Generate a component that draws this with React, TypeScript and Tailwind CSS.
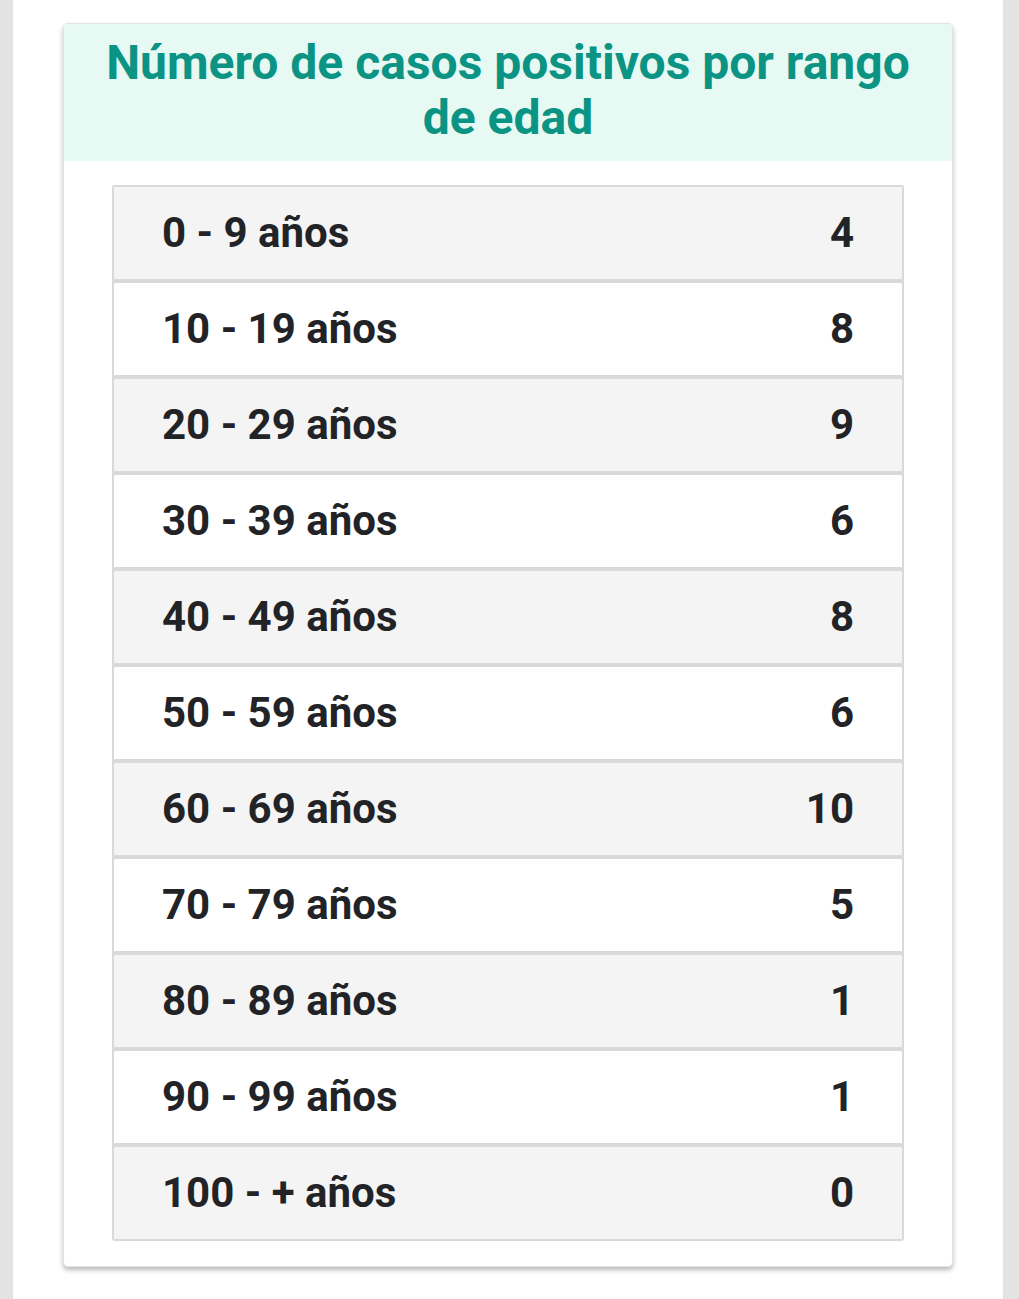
import React from "react";

const rows: [string, string][] = [
  ["0 - 9 años", "4"],
  ["10 - 19 años", "8"],
  ["20 - 29 años", "9"],
  ["30 - 39 años", "6"],
  ["40 - 49 años", "8"],
  ["50 - 59 años", "6"],
  ["60 - 69 años", "10"],
  ["70 - 79 años", "5"],
  ["80 - 89 años", "1"],
  ["90 - 99 años", "1"],
  ["100 - + años", "0"],
];

export default function App() {
  return (
    <div
      className="flex min-h-[1299px] w-full bg-[#e3e3e3]"
      style={{ fontFamily: "Roboto, 'Liberation Sans', sans-serif" }}
    >
      <div className="ml-[13px] w-[990px] bg-white pt-[23px]">
        <div className="mx-[50px] w-[890px] rounded-[5px] border border-[#e4e4e4] bg-white shadow-[0_3px_5px_rgba(0,0,0,0.28)]">
          <div className="rounded-t-[5px] bg-[#e6f9f3] px-4 pb-[16px] pt-[11px] text-center text-[48px] font-bold leading-[55px] text-[#0b9383]">
            Número de casos positivos por rango
            <br />
            de edad
          </div>
          <div className="px-[48px] pb-[25px] pt-[24px]">
            <div className="overflow-hidden rounded-[3px]">
              {rows.map(([label, value], i) => (
                <div
                  key={label}
                  className={
                    "flex h-[96px] items-center justify-between border-[2.5px] border-[#d9d9d9] pb-[2px] pl-[48px] pr-[48px] text-[42px] font-bold text-[#212327] " +
                    (i % 2 === 0 ? "bg-[#f4f4f4]" : "bg-white")
                  }
                >
                  <span>{label}</span>
                  <span>{value}</span>
                </div>
              ))}
            </div>
          </div>
        </div>
      </div>
    </div>
  );
}
